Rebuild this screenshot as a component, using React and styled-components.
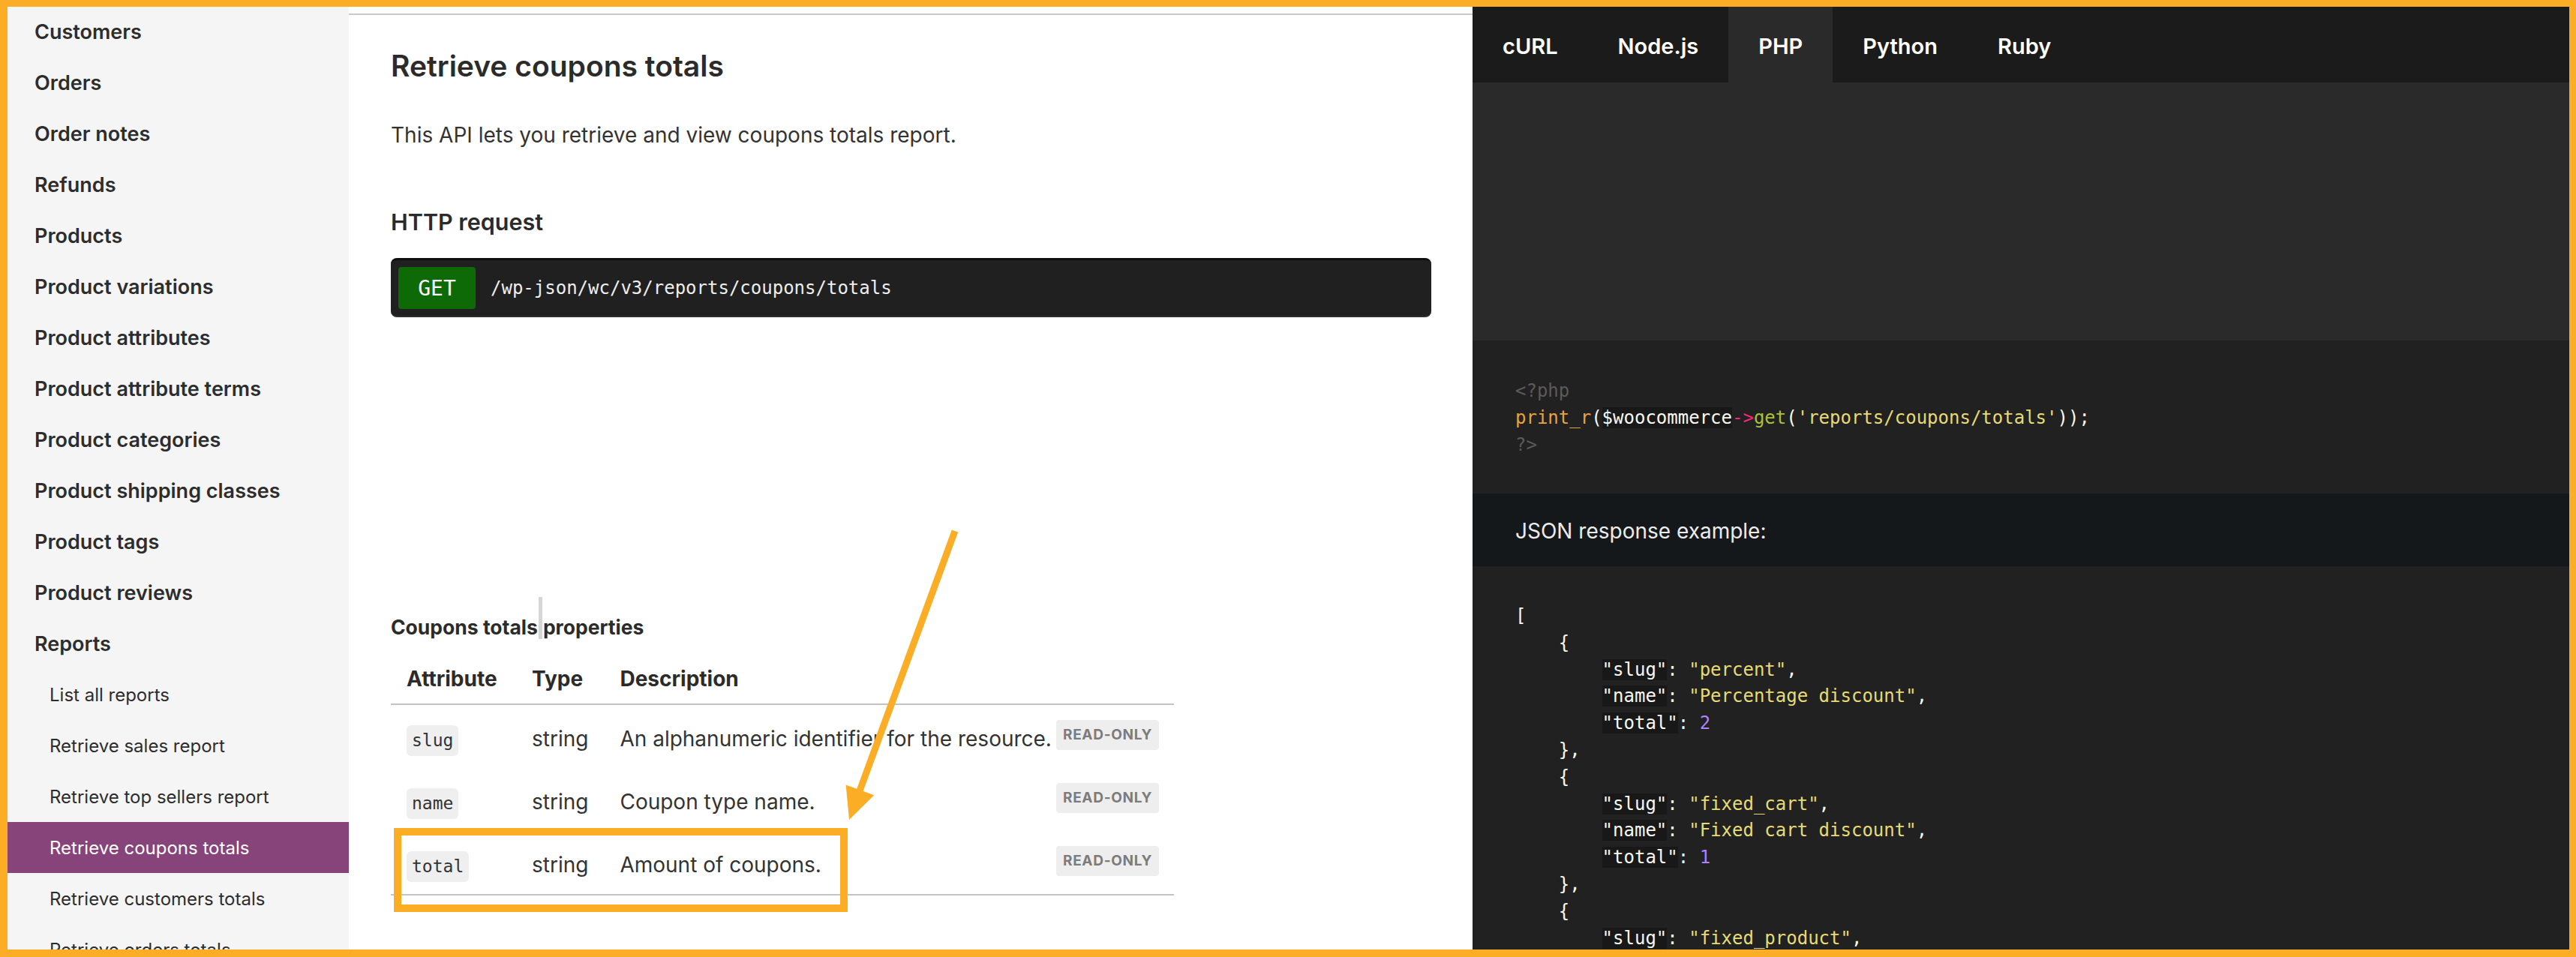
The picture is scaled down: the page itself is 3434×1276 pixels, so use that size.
import React from "react";
import styled, { createGlobalStyle } from "styled-components";

const UI = `"Inter", "Noto Sans", "Liberation Sans", sans-serif`;
const MONO = `"DejaVu Sans Mono", "Liberation Mono", monospace`;
const ORANGE = "#fcad26";

const GlobalStyle = createGlobalStyle`
  html, body { margin: 0; padding: 0; height: 100%; overflow: hidden; background: #fff; }
  #root { height: 100%; }
  *, *::before, *::after { box-sizing: border-box; }
`;

const Page = styled.div`
  position: relative;
  display: flex;
  width: 100vw;
  height: 100vh;
  overflow: hidden;
  font-family: ${UI};
`;

/* ---------- sidebar ---------- */
const Sidebar = styled.nav`
  width: 465px;
  flex-shrink: 0;
  background: #f5f5f5;
  padding-top: 8px;
  overflow: hidden;
`;

const NavItem = styled.div`
  height: 68px;
  display: flex;
  align-items: center;
  padding-left: ${(p) => (p.$sub ? 66 : 46)}px;
  font-size: ${(p) => (p.$sub ? 24 : 27)}px;
  font-weight: ${(p) => (p.$sub ? 400 : 600)};
  color: ${(p) => (p.$active ? "#ffffff" : "#2d2d2d")};
  background: ${(p) => (p.$active ? "#87447b" : "transparent")};
  white-space: nowrap;
`;

/* ---------- main column ---------- */
const Main = styled.main`
  width: 1498px;
  flex-shrink: 0;
  background: #fff;
  overflow: hidden;
`;

const TopRule = styled.div`
  height: 2px;
  margin-top: 18px;
  background: #c9c9c9;
`;

const Content = styled.div`
  padding: 0 55px 0 56px;
`;

const Title = styled.h1`
  margin: 44px 0 0;
  font-size: 39px;
  line-height: 48px;
  font-weight: 600;
  color: #2b2b2b;
`;

const Lead = styled.p`
  margin: 48px 0 0;
  font-size: 28px;
  line-height: 40px;
  color: #333;
`;

const SubTitle = styled.h2`
  margin: 76px 0 0;
  font-size: 30.5px;
  line-height: 40px;
  font-weight: 600;
  color: #2b2b2b;
`;

const Endpoint = styled.div`
  margin-top: 28px;
  display: flex;
  align-items: center;
  gap: 20px;
  padding: 9px 10px;
  background: #202020;
  border-top: 3px solid #0e0e0e;
  border-bottom: 2px solid #2e2e2e;
  border-radius: 8px;
`;

const Method = styled.span`
  width: 103px;
  height: 56px;
  display: flex;
  align-items: center;
  justify-content: center;
  background: #0d6a06;
  border-radius: 4px;
  color: #fff;
  font-family: ${MONO};
  font-size: 28px;
`;

const Path = styled.span`
  color: #eeeeee;
  font-family: ${MONO};
  font-size: 24px;
`;

const PropsTitle = styled.h3`
  margin: 395px 0 0;
  font-size: 26.5px;
  line-height: 36px;
  font-weight: 700;
  color: #2b2b2b;
`;

const Caret = styled.span`
  display: inline-block;
  width: 5px;
  height: 56px;
  margin: -30px 1px 0;
  vertical-align: text-bottom;
  background: #d6d6d6;
`;

const Table = styled.table`
  margin-top: 16px;
  border-collapse: collapse;
  border-bottom: 2px solid #c4c4c4;
  color: #333;
`;

const Th = styled.th`
  width: ${(p) => p.$w || "auto"};
  padding: 17px 21px 15px;
  text-align: left;
  font-size: 28px;
  line-height: 36px;
  font-weight: 700;
  color: #2b2b2b;
  border-bottom: 2px solid #c4c4c4;
  white-space: nowrap;
`;

const Td = styled.td`
  padding: 20px ${(p) => p.$pr ?? 21}px 14px ${(p) => p.$pl ?? 21}px;
  vertical-align: top;
  font-size: 28px;
  line-height: 50px;
  white-space: nowrap;
`;

const Pill = styled.code`
  display: inline-block;
  height: 41px;
  line-height: 41px;
  padding: 0 7px;
  vertical-align: middle;
  background: #efefef;
  border-radius: 6px;
  font-family: ${MONO};
  font-size: 23px;
  color: #333;
`;

const Badge = styled.span`
  display: block;
  height: 40px;
  line-height: 40px;
  padding: 0 9px;
  background: #eeeeee;
  border-radius: 4px;
  font-size: 19px;
  font-weight: 700;
  letter-spacing: 0.7px;
  color: #7c7c7c;
`;

/* ---------- code panel ---------- */
const CodePanel = styled.aside`
  flex: 1;
  display: flex;
  flex-direction: column;
  background: #2a2a2a;
  overflow: hidden;
`;

const Tabs = styled.div`
  height: 110px;
  flex-shrink: 0;
  display: flex;
  background: #1b1b1b;
`;

const Tab = styled.div`
  display: flex;
  align-items: center;
  padding: 12px 40px 0;
  font-size: 29px;
  font-weight: 600;
  color: #fff;
  background: ${(p) => (p.$active ? "#2a2a2a" : "transparent")};
`;

const Spacer = styled.div`
  height: 344px;
  flex-shrink: 0;
`;

const CodeBlock = styled.pre`
  margin: 0;
  flex-shrink: 0;
  padding: ${(p) => p.$pad || "49px 57px 47px"};
  background: #212121;
  font-family: ${MONO};
  font-size: 24px;
  line-height: ${(p) => p.$lh || "36px"};
  color: #f8f8f2;
  white-space: pre;
  ${(p) => (p.$grow ? "flex: 1;" : "")}
`;

const JsonHeader = styled.div`
  flex-shrink: 0;
  padding: 30px 57px 27px;
  background: #15181a;
  font-size: 28px;
  line-height: 40px;
  color: #ececec;
`;

const Tok = styled.span`
  color: ${(p) => p.$c || "inherit"};
  background: ${(p) => p.$bg || "transparent"};
`;

/* ---------- annotation overlay ---------- */
const Overlay = styled.svg`
  position: absolute;
  inset: 0;
  width: 3434px;
  height: 1276px;
  pointer-events: none;
  z-index: 10;
`;

const C = {
  dim: "#5a5a5a",
  fn: "#eaa33a",
  op: "#f92672",
  call: "#a8c23a",
  str: "#e6db74",
  num: "#ae81ff",
  key: "#181818",
};

const navItems = [
  ["Customers"],
  ["Orders"],
  ["Order notes"],
  ["Refunds"],
  ["Products"],
  ["Product variations"],
  ["Product attributes"],
  ["Product attribute terms"],
  ["Product categories"],
  ["Product shipping classes"],
  ["Product tags"],
  ["Product reviews"],
  ["Reports"],
  ["List all reports", true],
  ["Retrieve sales report", true],
  ["Retrieve top sellers report", true],
  ["Retrieve coupons totals", true, true],
  ["Retrieve customers totals", true],
  ["Retrieve orders totals", true],
];

const rows = [
  ["slug", "An alphanumeric identifier for the resource."],
  ["name", "Coupon type name."],
  ["total", "Amount of coupons."],
];

const json = [
  ["slug", "percent", "name", "Percentage discount", "2"],
  ["slug", "fixed_cart", "name", "Fixed cart discount", "1"],
  ["slug", "fixed_product", "name", "Fixed product discount", "0"],
];

function JsonBody() {
  const out = [<span key="open">{"[\n"}</span>];
  json.forEach(([k1, v1, k2, v2, n], i) => {
    out.push(
      <React.Fragment key={i}>
        {"    {\n        "}
        <Tok $bg={C.key}>"{k1}"</Tok>: <Tok $c={C.str}>"{v1}"</Tok>
        {",\n        "}
        <Tok $bg={C.key}>"{k2}"</Tok>: <Tok $c={C.str}>"{v2}"</Tok>
        {",\n        "}
        <Tok $bg={C.key}>"total"</Tok>: <Tok $c={C.num}>{n}</Tok>
        {i < json.length - 1 ? "\n    },\n" : "\n    }\n"}
      </React.Fragment>
    );
  });
  out.push(<span key="close">{"]"}</span>);
  return out;
}

export default function App() {
  return (
    <Page>
      <GlobalStyle />
      <Sidebar>
        {navItems.map(([label, sub, active]) => (
          <NavItem key={label} $sub={sub} $active={active}>
            {label}
          </NavItem>
        ))}
      </Sidebar>

      <Main>
        <TopRule />
        <Content>
          <Title>Retrieve coupons totals</Title>
          <Lead>This API lets you retrieve and view coupons totals report.</Lead>
          <SubTitle>HTTP request</SubTitle>
          <Endpoint>
            <Method>GET</Method>
            <Path>/wp-json/wc/v3/reports/coupons/totals</Path>
          </Endpoint>
          <PropsTitle>
            Coupons totals<Caret />properties
          </PropsTitle>
          <Table>
            <thead>
              <tr>
                <Th $w="167px">Attribute</Th>
                <Th $w="114px">Type</Th>
                <Th>Description</Th>
                <Th />
              </tr>
            </thead>
            <tbody>
              {rows.map(([attr, desc]) => (
                <tr key={attr}>
                  <Td>
                    <Pill>{attr}</Pill>
                  </Td>
                  <Td>string</Td>
                  <Td $pr={6}>{desc}</Td>
                  <Td $pl={0} $pr={20}>
                    <Badge>READ-ONLY</Badge>
                  </Td>
                </tr>
              ))}
            </tbody>
          </Table>
        </Content>
      </Main>

      <CodePanel>
        <Tabs>
          <Tab>cURL</Tab>
          <Tab>Node.js</Tab>
          <Tab $active>PHP</Tab>
          <Tab>Python</Tab>
          <Tab>Ruby</Tab>
        </Tabs>
        <Spacer />
        <CodeBlock>
          <Tok $c={C.dim}>{"<?php"}</Tok>
          {"\n"}
          <Tok $c={C.fn}>print_r</Tok>(<Tok $bg={C.key}>$woocommerce</Tok>
          <Tok $c={C.op}>{"->"}</Tok>
          <Tok $c={C.call}>get</Tok>(<Tok $c={C.str}>'reports/coupons/totals'</Tok>));
          {"\n"}
          <Tok $c={C.dim}>{"?>"}</Tok>
        </CodeBlock>
        <JsonHeader>JSON response example:</JsonHeader>
        <CodeBlock $pad="49px 57px" $lh="35.8px" $grow>
          <JsonBody />
        </CodeBlock>
      </CodePanel>

      <Overlay viewBox="0 0 3434 1276">
        <path
          d="M0 0H3434V1276H0Z M10 9V1266H3425V9Z"
          fill={ORANGE}
          fillRule="evenodd"
        />
        <rect x="530" y="1109" width="595" height="102" fill="none" stroke={ORANGE} strokeWidth="10" />
        <line x1="1273" y1="708" x2="1141" y2="1068" stroke={ORANGE} strokeWidth="9" />
        <polygon points="1132,1093 1127.6,1046.6 1165.2,1060.3" fill={ORANGE} />
      </Overlay>
    </Page>
  );
}
